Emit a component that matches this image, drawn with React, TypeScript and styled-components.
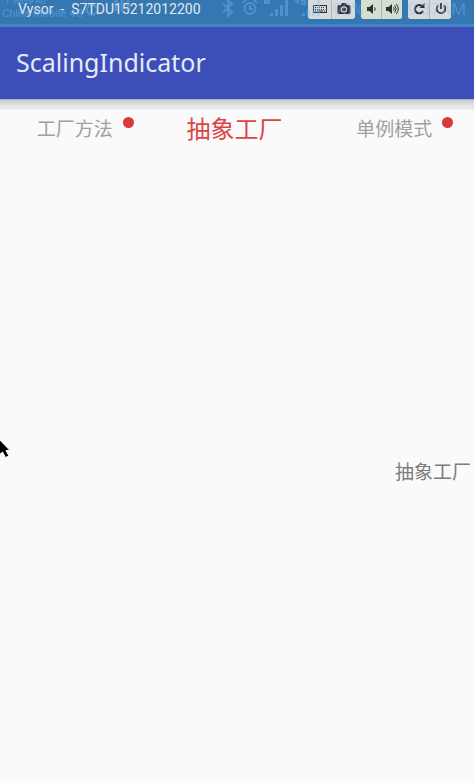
import React from 'react';
import styled, { createGlobalStyle } from 'styled-components';

const Global = createGlobalStyle`
  * { box-sizing: border-box; }
  html, body, #root { height: 100%; }
  body { margin: 0; background: #fafafa; font-family: "Noto Sans", "Noto Sans CJK SC", sans-serif; }
  button { font: inherit; border: 0; padding: 0; margin: 0; }
`;

const Screen = styled.div`
  min-height: 100%;
  display: flex;
  flex-direction: column;
  overflow: hidden;
`;

const WindowBar = styled.header`
  position: relative;
  height: 27px;
  background: #3477b1;
  border-bottom: 3px solid #4585c6;
  display: flex;
  align-items: flex-start;
  justify-content: space-between;
  padding: 0 23px 0 18px;
  overflow: hidden;
`;

const WindowTitle = styled.div`
  position: relative;
  font-family: Roboto, sans-serif;
  font-size: 14px;
  line-height: 18px;
  color: #e3e8ec;
  white-space: pre;
`;

const StatusLayer = styled.div`
  position: absolute;
  inset: 0;
  z-index: 1;
  pointer-events: none;
  color: rgba(130, 190, 255, 0.36);
  font-family: Roboto, "Noto Sans CJK SC", sans-serif;
`;

const Carrier = styled.div`
  position: absolute;
  left: 2px;
  top: -7px;
  font-size: 11px;
  line-height: 14px;
  font-weight: 500;
`;

const StatusIcons = styled.svg`
  position: absolute;
  left: 80px;
  top: 0;
`;

const StatusText = styled.div<{ $right: number }>`
  position: absolute;
  top: 0;
  right: ${(p) => p.$right}px;
  font-size: 17px;
  line-height: 19px;
`;

const Controls = styled.div`
  position: relative;
  display: flex;
  gap: 6px;
`;

const ControlGroup = styled.div`
  display: flex;
  gap: 1px;
  height: 19px;
  border-radius: 0 0 3px 3px;
  background: #aeb4b8;
  overflow: hidden;
`;

const Control = styled.button<{ $width: number; $tint?: string }>`
  width: ${(p) => p.$width}px;
  display: flex;
  align-items: center;
  justify-content: center;
  padding-bottom: 1px;
  color: #2d3133;
  background: ${(p) => p.$tint ?? '#d6dadc'};
`;

const AppBar = styled.div`
  height: 72px;
  background: #3e4eb8;
  display: flex;
  align-items: center;
  padding: 0 16px 2px;
`;

const AppTitle = styled.h1`
  margin: 0;
  font-size: 25px;
  line-height: 34px;
  font-weight: 400;
  color: #e3ebfa;
`;

const Shadow = styled.div`
  height: 11px;
  background: linear-gradient(#8d8f98 0, #cdd0cf 1px, #d4d6d5 4px, #e4e4e6 6px, #e8e8ea 10px, #f4f4f5 11px);
`;

const Tabs = styled.nav`
  display: grid;
  grid-template-columns: repeat(3, 1fr);
  margin-left: -5px;
  height: 38px;
`;

const Tab = styled.button<{ $active?: boolean }>`
  display: flex;
  align-items: center;
  justify-content: center;
  background: transparent;
  color: ${(p) => (p.$active ? '#dc4446' : '#a0a0a0')};
  && { font-size: ${(p) => (p.$active ? 24 : 19)}px; }
  line-height: 38px;
`;

const TabLabel = styled.span`
  position: relative;
`;

const Badge = styled.span`
  position: absolute;
  left: calc(100% + 10px);
  top: 7px;
  width: 11px;
  height: 11px;
  border-radius: 50%;
  background: #da383b;
`;

const Pager = styled.main`
  position: relative;
  flex: 1;
  display: flex;
  align-items: center;
  justify-content: flex-end;
  padding: 14px 3px 0 0;
`;

const PageText = styled.p`
  margin: 0;
  font-size: 19px;
  line-height: 28px;
  color: #7c7c7c;
`;

const Pointer = styled.svg`
  position: absolute;
  left: 0;
  top: 290px;
`;

const tabs = [
  { label: '工厂方法', badge: true },
  { label: '抽象工厂', active: true },
  { label: '单例模式', badge: true },
];

const KeyboardIcon = () => (
  <svg width="14" height="10" viewBox="0 0 14 10" fill="none" stroke="currentColor">
    <rect x="0.5" y="1.5" width="13" height="7" />
    <path d="M2 3.5h10M2 5.5h10" strokeDasharray="1 1" />
    <path d="M2 7h1M4 7h6M11 7h1" />
  </svg>
);

const CameraIcon = () => (
  <svg width="14" height="12" viewBox="0 0 14 12" fill="currentColor">
    <path fillRule="evenodd" d="M4 2l1-2h4l1 2h2a1.5 1.5 0 0 1 1.5 1.5v6A1.5 1.5 0 0 1 12 11H2A1.5 1.5 0 0 1 .5 9.500v-6A1.5 1.5 0 0 1 2 2zM7 3.200a3.200 3.200 0 1 0 0 6.400a3.200 3.200 0 1 0 0-6.400z" />
    <circle cx="7" cy="6.400" r="2" />
  </svg>
);

const SpeakerIcon = ({ loud = false }: { loud?: boolean }) => (
  <svg width={loud ? 13 : 9} height="12" viewBox={loud ? '0 0 13 12' : '0 0 9 12'} fill="none" stroke="currentColor">
    <path fill="currentColor" stroke="none" d="M0 4h2.500L6 1v10L2.500 8H0z" />
    <path d="M7.500 4.300q1.500 1.700 0 3.400" />
    {loud && <path d="M8.700 2.500q3 3.500 0 7M10.300 1q4 5 0 10" />}
  </svg>
);

const ReloadIcon = () => (
  <svg width="12" height="12" viewBox="0 0 12 12" fill="none" stroke="currentColor" strokeWidth="2">
    <path d="M9.500 3.500A4.200 4.200 0 1 0 10 8" />
    <path d="M11.500 0v5H6.500z" fill="currentColor" stroke="none" />
  </svg>
);

const PowerIcon = () => (
  <svg width="12" height="12" viewBox="0 0 12 12" fill="none" stroke="currentColor" strokeWidth="1.700">
    <path d="M3.200 2.500a4.300 4.300 0 1 0 5.600 0M6 0v6" />
  </svg>
);

export default function App() {
  return (
    <Screen>
      <Global />
      <WindowBar>
        <StatusLayer aria-hidden="true">
          <Carrier>中国移动<br />China Mobile 4G</Carrier>
          <StatusIcons width="250" height="18" viewBox="0 0 250 18" fill="none" stroke="currentColor" strokeWidth="2">
            <circle cx="12" cy="10" r="5" />
            <path d="M36 0v11M42 0v11M48 0v11" strokeWidth="3" />
            <path d="M143 4l9 8-4 4V0l4 4-9 8" />
            <circle cx="170" cy="8.500" r="5.500" />
            <path d="M170 5v4h3M163 3l3-3M177 3l-3-3" />
            <path d="M191.500 16v-3M196.500 16V9M201.500 16V5M206.500 16V0M223.500 16v-3M228.500 16V9M233.500 16V5M238.500 16V0" strokeWidth="3" />
            <path d="M185 1h4v2h-4zM215 1h3v3M220 1h5v3h-4" />
          </StatusIcons>
          <StatusText $right={110}>90%</StatusText>
          <StatusText $right={8}>9:37AM</StatusText>
        </StatusLayer>
        <WindowTitle>{'Vysor  -  S7TDU15212012200'}</WindowTitle>
        <Controls>
          <ControlGroup>
            <Control $width={23} aria-label="Keyboard"><KeyboardIcon /></Control>
            <Control $width={23} aria-label="Screenshot"><CameraIcon /></Control>
          </ControlGroup>
          <ControlGroup>
            <Control $width={20} $tint="#d4dfd0" aria-label="Volume down"><SpeakerIcon /></Control>
            <Control $width={20} $tint="#d4dfd0" aria-label="Volume up"><SpeakerIcon loud /></Control>
          </ControlGroup>
          <ControlGroup>
            <Control $width={21} aria-label="Rotate"><ReloadIcon /></Control>
            <Control $width={21} aria-label="Power"><PowerIcon /></Control>
          </ControlGroup>
        </Controls>
      </WindowBar>
      <AppBar><AppTitle>ScalingIndicator</AppTitle></AppBar>
      <Shadow />
      <Tabs>
        {tabs.map((t) => (
          <Tab key={t.label} $active={t.active}>
            <TabLabel>{t.label}{t.badge && <Badge />}</TabLabel>
          </Tab>
        ))}
      </Tabs>
      <Pager>
        <PageText>抽象工厂</PageText>
        <Pointer width="12" height="22" viewBox="0 0 12 22" aria-hidden="true">
          <path d="M-3 -1L10 12.500H6L9 18L5.500 19.500L2.500 14L-3 19z" fill="#000" stroke="#fff" />
        </Pointer>
      </Pager>
    </Screen>
  );
}
